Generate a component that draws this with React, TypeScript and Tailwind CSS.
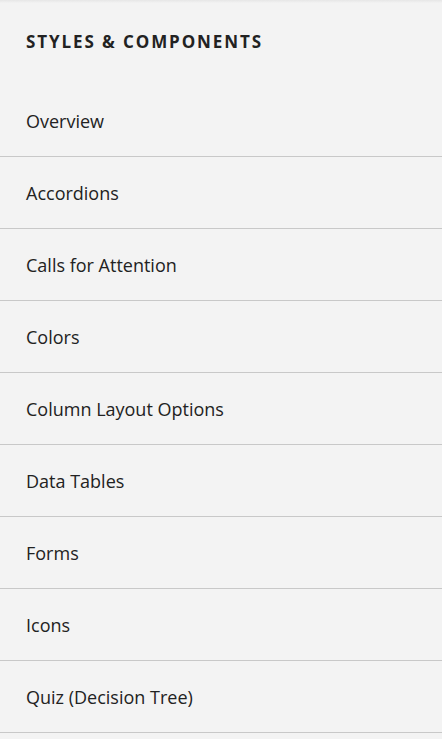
import React from 'react';

const items = [
  'Overview',
  'Accordions',
  'Calls for Attention',
  'Colors',
  'Column Layout Options',
  'Data Tables',
  'Forms',
  'Icons',
  'Quiz (Decision Tree)',
];

const App = () => {
  return (
    <div className="min-h-[739px] w-full bg-[#f3f3f3] font-['Open_Sans',sans-serif] text-[#222]">
      <div className="h-[3px] bg-gradient-to-b from-[#e6e6e6] to-[#f3f3f3]" />
      <div className="flex h-[82px] items-center pb-[4px] pl-[26px]">
        <h2 className="text-[17px] font-bold uppercase tracking-[1.9px] text-[#222]">
          Styles &amp; Components
        </h2>
      </div>
      <nav>
        {items.map((item) => (
          <a
            key={item}
            href="#"
            className="flex h-[72px] items-center border-b border-[#c8c8c8] pt-[2px] pl-[26px] text-[18px] text-[#222]"
          >
            {item}
          </a>
        ))}
      </nav>
    </div>
  );
};

export default App;
